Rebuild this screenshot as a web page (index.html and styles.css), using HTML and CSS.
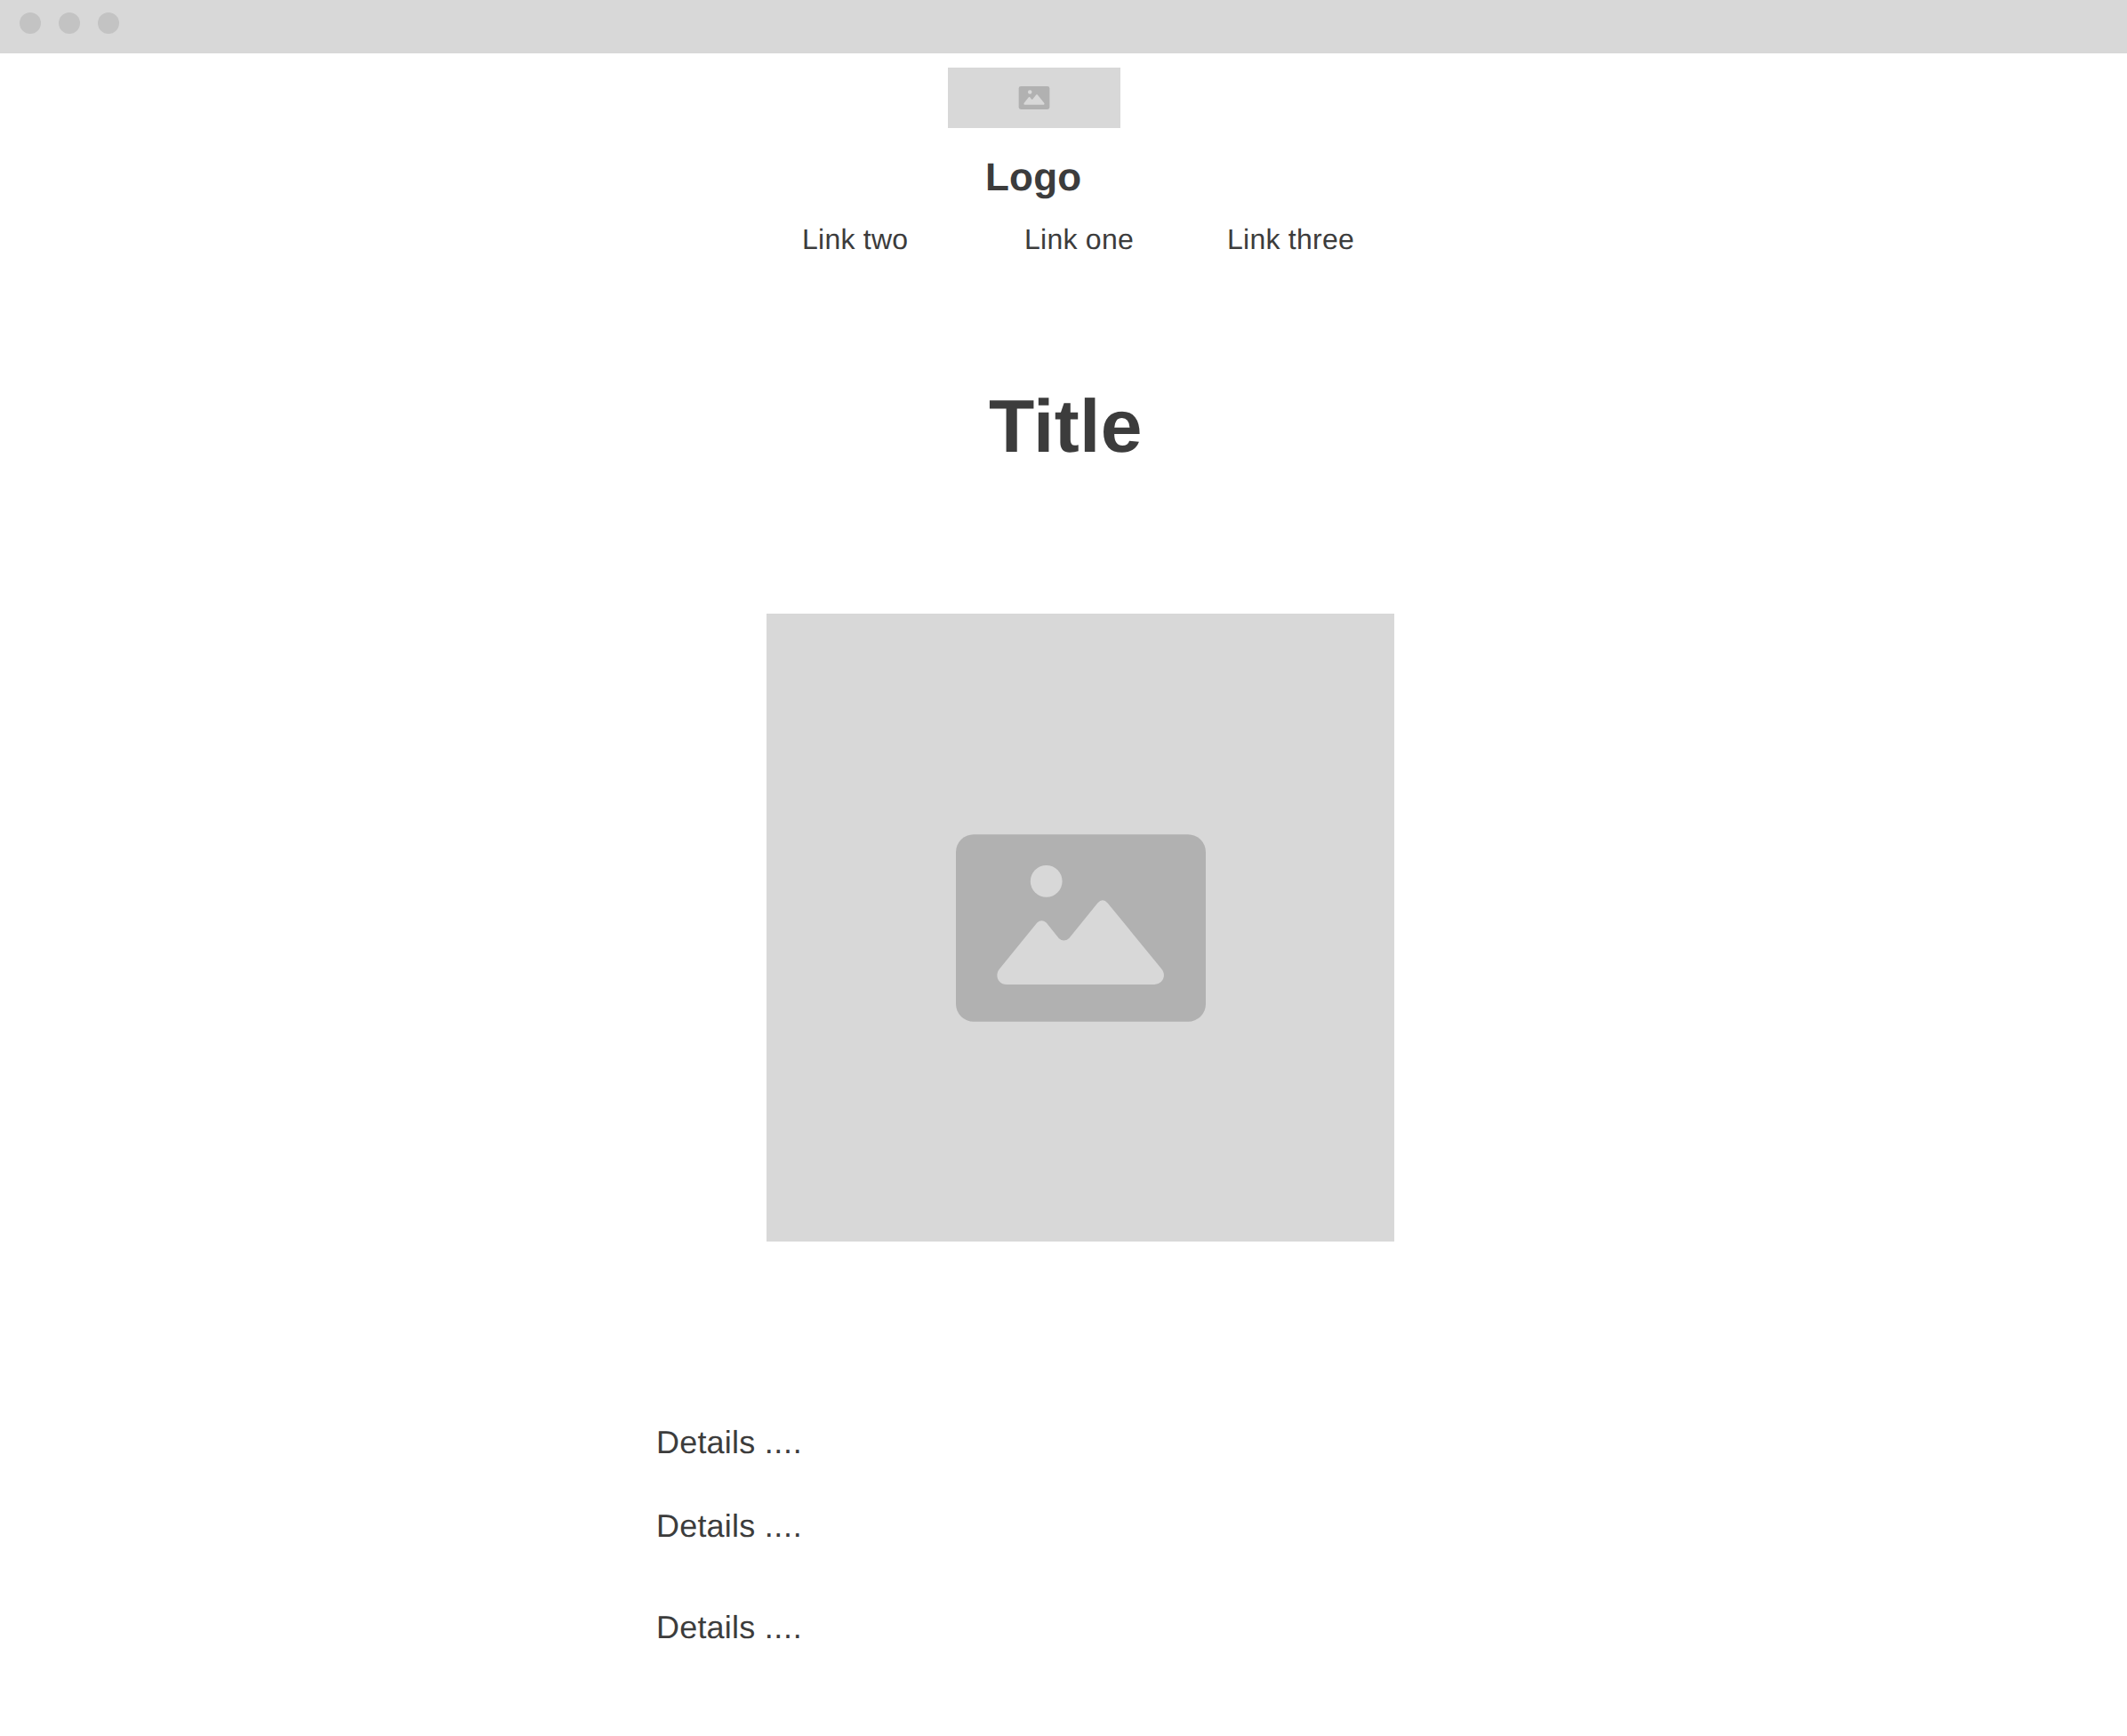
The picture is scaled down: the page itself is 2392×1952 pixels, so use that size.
FILE: index.html
```html
<!DOCTYPE html>
<html lang="en">
<head>
<meta charset="utf-8">
<title>Wireframe</title>
<link rel="stylesheet" href="styles.css">
</head>
<body>
<svg class="defs" width="0" height="0" aria-hidden="true">
  <symbol id="picture" viewBox="0 0 281 210.6">
    <rect class="icon-frame" width="281" height="210.6" rx="20"/>
    <circle class="icon-cut" cx="101.7" cy="52.7" r="17.9"/>
    <path class="icon-cut" d="M49 151.3L91.3 99.3Q96.3 94.6 101.7 99.3L115.7 116.7Q121.3 122 127.3 116.7L159.3 77.3Q165 70.9 170.7 77.3L231.3 151.3C237.5 159 232 168.7 223.3 168.7H57C48 168.7 43 159 49 151.3Z"/>
  </symbol>
</svg>
<div class="window-bar">
  <span class="dot"></span><span class="dot"></span><span class="dot"></span>
</div>
<header class="header">
  <div class="logo-image"><svg class="icon-small"><use href="#picture"/></svg></div>
  <div class="logo-text">Logo</div>
  <nav class="nav">
    <a class="link link-two">Link two</a>
    <a class="link link-one">Link one</a>
    <a class="link">Link three</a>
  </nav>
</header>
<main class="main">
  <h1 class="title">Title</h1>
  <div class="hero"><svg class="icon-large"><use href="#picture"/></svg></div>
  <div class="details">
    <p class="detail">Details <span class="leader">....</span></p>
    <p class="detail">Details <span class="leader">....</span></p>
    <p class="detail detail-last">Details <span class="leader">....</span></p>
  </div>
</main>
</body>
</html>
```
FILE: styles.css
```css
* { box-sizing: border-box; }
body {
  margin: 0;
  min-height: 1952px;
  background: #fff;
  color: #3c3c3c;
  font-family: "Liberation Sans", Arial, sans-serif;
  text-rendering: geometricPrecision;
}
.defs { display: none; }
.icon-frame { fill: #b1b1b1; }
.icon-cut { fill: #d8d8d8; }
.window-bar {
  display: flex;
  gap: 20px;
  height: 60px;
  padding: 14px 22px;
  background: #d8d8d8;
}
.dot {
  width: 24px;
  height: 24px;
  border-radius: 50%;
  background: #c3c3c3;
}
.header {
  display: flex;
  flex-direction: column;
  align-items: flex-start;
  padding-top: 16px;
}
.logo-image {
  display: flex;
  align-items: center;
  justify-content: center;
  width: 194px;
  height: 68px;
  margin-left: 1066px;
  background: #d8d8d8;
}
.icon-small { width: 36px; height: 26px; }
.logo-text {
  margin: 34px 0 0 1108px;
  font-size: 44px;
  font-weight: 700;
  line-height: 44px;
  letter-spacing: 0.2px;
}
.nav {
  display: flex;
  margin: 31px 0 0 902px;
}
.link {
  font-size: 32px;
  line-height: 32px;
  letter-spacing: 0.25px;
  white-space: nowrap;
}
.link-two { width: 250px; }
.link-one { width: 228px; }
.main {
  display: flex;
  flex-direction: column;
  align-items: flex-start;
}
.title {
  margin: 152px 0 0 1112px;
  font-size: 84px;
  line-height: 84px;
  letter-spacing: 0.3px;
}
.hero {
  display: flex;
  align-items: center;
  justify-content: center;
  width: 706px;
  height: 706px;
  margin: 169px 0 0 862px;
  background: #d8d8d8;
}
.icon-large { width: 281px; height: 211px; }
.details { padding: 208px 0 0 738px; }
.detail {
  margin: 0 0 58px;
  font-size: 36px;
  line-height: 36px;
  letter-spacing: 0.2px;
}
.leader { letter-spacing: 0.7px; }
.detail-last { margin: 78px 0 0; }
```
